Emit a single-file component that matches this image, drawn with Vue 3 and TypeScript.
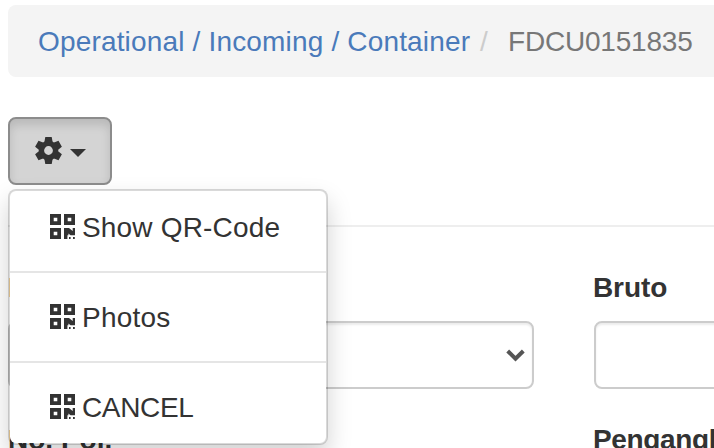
<script setup lang="ts">
import { ref } from 'vue'

const actions = ref([
  { label: 'Show QR-Code', cls: 'show' },
  { label: 'Photos', cls: 'photos' },
  { label: 'CANCEL', cls: 'cancel' },
])
</script>

<template>
  <main class="page">
    <nav class="breadcrumb">
      <a class="crumb-link">Operational / Incoming / Container</a>
      <span class="sep">/</span>
      <span class="current">FDCU0151835</span>
    </nav>

    <div class="toolbar">
      <button class="toggle" type="button" aria-label="Actions">
        <svg class="gear" viewBox="-13.5 -13.5 27 27">
          <path d="M-3.2 -13.5H3.2L4.2 -8H-4.2ZM-3.2 13.5H3.2L4.2 8H-4.2Z" />
          <path transform="rotate(60)" d="M-3.4 -13.5H3.4L4.2 -8H-4.2ZM-3.4 13.5H3.4L4.2 8H-4.2Z" />
          <path transform="rotate(-60)" d="M-3.4 -13.5H3.4L4.2 -8H-4.2ZM-3.4 13.5H3.4L4.2 8H-4.2Z" />
          <circle class="ring" r="7.1" />
        </svg>
        <span class="caret"></span>
      </button>
      <ul class="menu">
        <li v-for="a in actions" :key="a.label" class="item">
          <svg class="qr" viewBox="0 0 25 25">
            <path
              fill-rule="evenodd"
              d="M0 0H11V11H0ZM3.7 3.7V7.3H7.3V3.7ZM14 0H25V11H14ZM17.7 3.7V7.3H21.3V3.7ZM0 14H11V25H0ZM3.7 17.7V21.3H7.3V17.7ZM14 14H19L22.7 17V14H25V21.3H20.5L18.4 19.6V21.3H17.4V25H14ZM19 23H20.6V25H19ZM23 23H24.8V25H23Z"
            />
          </svg>
          <span :class="a.cls">{{ a.label }}</span>
        </li>
      </ul>
    </div>

    <hr class="rule" />

    <form class="form">
      <div class="col">
        <label class="label">No.</label>
        <div class="control select">
          <svg class="chevron" viewBox="0 0 19 13">
            <path d="M1.7 2L9.5 9.6L17.3 2" />
          </svg>
        </div>
        <label class="label">No. Pol.</label>
      </div>
      <div class="col">
        <label class="label bruto">Bruto</label>
        <div class="control"></div>
        <label class="label peng">Pengangkut</label>
      </div>
    </form>
  </main>
</template>

<style>
body {
  overflow: hidden;
  background: #fff;
}
</style>

<style scoped>
.page {
  box-sizing: border-box;
  width: 714px;
  height: 448px;
  padding: 5px 0 0 8px;
  overflow: hidden;
  font: 28px/40px "Liberation Sans", Arial, sans-serif;
  color: #333;
}
.breadcrumb {
  display: flex;
  height: 40px;
  padding: 17px 0 15px 30px;
  margin-bottom: 40px;
  border-radius: 8px 0 0 8px;
  background: #f4f4f4;
  white-space: nowrap;
}
.crumb-link {
  width: 432px;
  letter-spacing: 0.17px;
  color: #4a7aba;
}
.sep {
  width: 18px;
  padding: 0 10px;
  color: #ccc;
}
.current {
  letter-spacing: -0.2px;
  color: #777;
}
.toolbar {
  position: relative;
  height: 68px;
}
.toggle {
  display: flex;
  box-sizing: border-box;
  width: 104px;
  height: 68px;
  align-items: center;
  gap: 8px;
  padding: 0 24px 0 24.5px;
  border: 2px solid #8c8c8c;
  border-radius: 8px;
  background: #d4d4d4;
  box-shadow: inset 0 6px 10px rgba(0, 0, 0, 0.125);
}
.gear {
  width: 27px;
  height: 27px;
  flex: none;
  margin-top: -1px;
  fill: #333;
}
.ring {
  fill: none;
  stroke: #333;
  stroke-width: 5.4;
}
.caret {
  margin-top: 3px;
  border: 8px solid transparent;
  border-top-color: #333;
  border-bottom: 0;
}
.menu {
  position: absolute;
  top: 72px;
  left: 0;
  z-index: 2;
  box-sizing: border-box;
  width: 320px;
  height: 256px;
  margin: 0;
  padding: 10px 0;
  list-style: none;
  border: 2px solid rgba(0, 0, 0, 0.15);
  border-radius: 8px;
  background: #fff;
  background-clip: padding-box;
  box-shadow: 0 12px 24px rgba(0, 0, 0, 0.175);
}
.item {
  display: flex;
  align-items: center;
  gap: 7px;
  height: 52px;
  padding-left: 40px;
  white-space: nowrap;
}
.item + .item {
  margin-top: 18px;
  padding-top: 18px;
  border-top: 2px solid #e5e5e5;
}
.item span {
  padding-top: 2px;
}
.show {
  letter-spacing: 0.18px;
}
.photos {
  letter-spacing: 0.2px;
}
.cancel {
  letter-spacing: -0.35px;
}
.qr {
  width: 25px;
  height: 25px;
  flex: none;
  margin-top: -1px;
  fill: #333;
}
.rule {
  margin: 40px 0;
  border: 0;
  border-top: 2px solid #eee;
}
.form {
  display: grid;
  grid-template-columns: 526px 526px;
  column-gap: 60px;
}
.label {
  display: block;
  box-sizing: border-box;
  height: 54px;
  padding-top: 1px;
  font-weight: 700;
  white-space: nowrap;
}
.bruto {
  margin-left: -1px;
  letter-spacing: -0.1px;
}
.peng {
  margin-left: -1px;
  letter-spacing: -0.35px;
}
.control {
  display: flex;
  box-sizing: border-box;
  height: 68px;
  margin-bottom: 30px;
  border: 2px solid #ccc;
  border-radius: 8px;
  background: #fff;
  box-shadow: inset 0 2px 2px rgba(0, 0, 0, 0.075);
}
.select {
  align-items: center;
  justify-content: flex-end;
  padding-right: 7px;
}
.chevron {
  width: 19px;
  height: 13px;
  fill: none;
  stroke: #555;
  stroke-width: 4;
}
</style>
